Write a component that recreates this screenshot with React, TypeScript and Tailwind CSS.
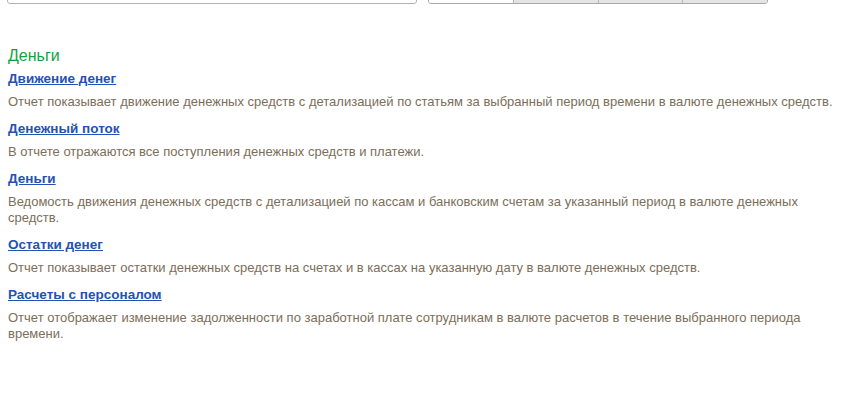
import React from "react";

const REPORTS = [
  {
    title: "Движение денег",
    text: "Отчет показывает движение денежных средств с детализацией по статьям за выбранный период времени в валюте денежных средств.",
  },
  {
    title: "Денежный поток",
    text: "В отчете отражаются все поступления денежных средств и платежи.",
  },
  {
    title: "Деньги",
    text: "Ведомость движения денежных средств с детализацией по кассам и банковским счетам за указанный период в валюте денежных средств.",
  },
  {
    title: "Остатки денег",
    text: "Отчет показывает остатки денежных средств на счетах и в кассах на указанную дату в валюте денежных средств.",
  },
  {
    title: "Расчеты с персоналом",
    text: "Отчет отображает изменение задолженности по заработной плате сотрудникам в валюте расчетов в течение выбранного периода времени.",
  },
];

export default function App() {
  const tabs = [0, 1, 2, 3];

  return (
    <div
      className="w-[853px] h-[394px] bg-white overflow-hidden"
      style={{ fontFamily: '"Liberation Sans", Arial, sans-serif' }}
    >
      {/* Top controls, scrolled mostly out of view */}
      <div className="h-[4px] overflow-hidden flex items-end pl-[7px]">
        <div className="w-[410px] h-[24px] shrink-0 border border-[#b3b3b3] rounded-[3px] bg-white" />
        <div className="ml-[11px] w-[340px] h-[24px] shrink-0 flex border border-[#a9a9a9] rounded-[3px] overflow-hidden">
          {tabs.map((t) => (
            <div
              key={t}
              className={
                t === 0
                  ? "flex-1 bg-white"
                  : "flex-1 bg-[#e4e4e4] border-l border-[#b5b5b5]"
              }
            />
          ))}
        </div>
      </div>

      <div className="pl-[8px] w-[838px] pt-[42px]">
        <h2 className="text-[16px] leading-[20px] text-[#12a140] mb-[5px]">Деньги</h2>
        {REPORTS.map((r) => (
          <div key={r.title} className="mb-[11px]">
            <a
              href="#"
              className="block w-fit text-[13.5px] leading-[16px] font-bold text-[#2452b3] underline mb-[7px]"
            >
              {r.title}
            </a>
            <p className="text-[13px] leading-[16px] text-[#7c6e59]">{r.text}</p>
          </div>
        ))}
      </div>
    </div>
  );
}
